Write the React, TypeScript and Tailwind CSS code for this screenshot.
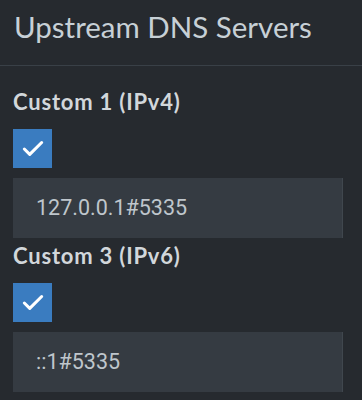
import { Check } from 'lucide-react';

const servers = [
  { label: 'Custom 1 (IPv4)', value: '127.0.0.1#5335' },
  { label: 'Custom 3 (IPv6)', value: '::1#5335' },
];

function ServerField({ label, value }: { label: string; value: string }) {
  return (
    <div className="flex flex-col">
      <label className="h-[30px] flex items-center text-[22px] font-bold leading-none tracking-[0.8px] text-[#d2d7db] font-['Lato',sans-serif]">
        {label}
      </label>
      <div className="mt-[12px] w-[39px] h-[39px] bg-[#3a7cc0] flex items-center justify-center">
        <Check className="w-[26px] h-[26px] text-white" strokeWidth={2.8} />
      </div>
      <div className="mt-[10px] h-[60px] bg-[#353b42] border-r border-[#40474e] flex items-center pl-[23px] text-[21.5px] text-[#bfc6cc] font-['Roboto',sans-serif]">
        {value}
      </div>
    </div>
  );
}

export default function App() {
  return (
    <div className="w-[362px] h-[400px] bg-[#262a2f] overflow-hidden">
      <div className="h-[66px] border-b border-[#394047] px-[14px] flex items-center">
        <h3 className="text-[29.5px] leading-none text-[#c7d0d6] font-['Lato',sans-serif] -mt-[11px]">
          Upstream DNS Servers
        </h3>
      </div>
      <div className="px-[13px] pt-[21px] pr-[19px] flex flex-col gap-[3px]">
        {servers.map((s) => (
          <ServerField key={s.label} label={s.label} value={s.value} />
        ))}
      </div>
    </div>
  );
}
